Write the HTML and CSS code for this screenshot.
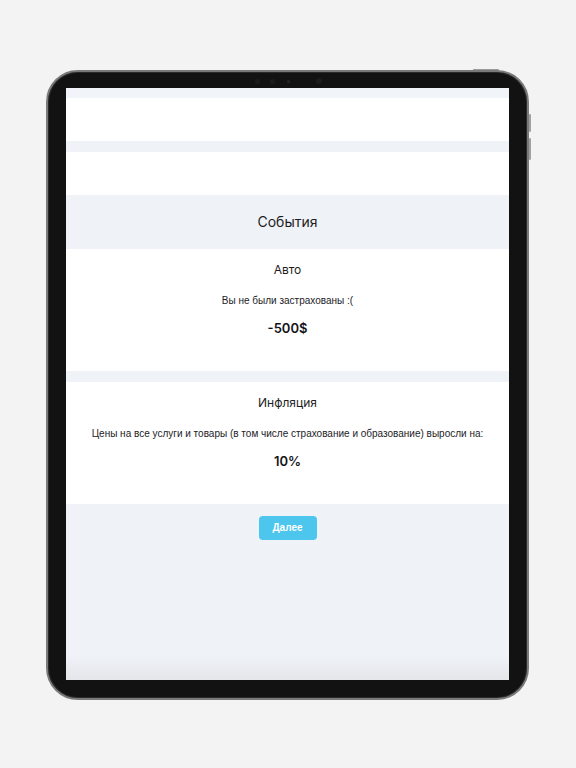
FILE: index.html
```html
<!DOCTYPE html>
<html lang="ru">
<head>
<meta charset="utf-8">
<title>События</title>
<link rel="stylesheet" href="styles.css">
</head>
<body>
<div class="device">
  <span class="cam cam-a"></span>
  <span class="cam cam-b"></span>
  <span class="cam cam-c"></span>
  <span class="cam cam-d"></span>
  <span class="btn-top"></span>
  <span class="btn-side btn-side-1"></span>
  <span class="btn-side btn-side-2"></span>
  <div class="screen">
    <div class="strip"></div>
    <div class="blank"></div>
    <div class="gap"></div>
    <div class="blank"></div>
    <div class="header">События</div>
    <section class="card">
      <h2 class="card-title">Авто</h2>
      <p class="card-text">Вы не были застрахованы :(</p>
      <p class="card-value">-500$</p>
    </section>
    <div class="gap"></div>
    <section class="card">
      <h2 class="card-title">Инфляция</h2>
      <p class="card-text">Цены на все услуги и товары (в том числе страхование и образование) выросли на:</p>
      <p class="card-value">10%</p>
    </section>
    <div class="footer">
      <button class="next">Далее</button>
    </div>
  </div>
</div>
</body>
</html>
```
FILE: styles.css
```css
* { box-sizing: border-box; }

html, body {
  margin: 0;
  height: 100%;
}

body {
  background: #f4f3f3;
  display: flex;
  align-items: center;
  justify-content: center;
  font-family: "Liberation Sans", Arial, sans-serif;
  color: #1b1b1f;
}

/* tablet frame */
.device {
  position: relative;
  width: 483px;
  height: 630px;
  margin-top: 1px;
  margin-right: 1px;
  padding: 16px 18px 18px 18px;
  background: #121212;
  border: 2px solid #7a7a7a;
  border-radius: 32px;
  box-shadow: inset 0 0 0 1px #2a2a2a;
}

.cam {
  position: absolute;
  top: 7px;
  width: 5px;
  height: 5px;
  border-radius: 50%;
  background: #1c1c1f;
}
.cam-a { left: 207px; }
.cam-b { left: 222px; }
.cam-c { left: 239px; width: 3px; height: 3px; top: 8px; background: #26262a; }
.cam-d { left: 268px; width: 6px; height: 6px; top: 6px; }

.btn-top {
  position: absolute;
  top: -3px;
  right: 28px;
  width: 26px;
  height: 1px;
  border-radius: 1px;
  background: #9a9a9a;
}
.btn-side {
  position: absolute;
  right: -4px;
  width: 2px;
  border-radius: 1px;
  background: #a0a0a0;
}
.btn-side-1 { top: 42px; height: 18px; }
.btn-side-2 { top: 66px; height: 22px; }

/* app screen */
.screen {
  width: 443px;
  height: 592px;
  overflow: hidden;
  display: flex;
  flex-direction: column;
  background: #eff2f7;
}

.strip { height: 10px; background: #f1f4f9; flex: none; }
.blank { height: 43px; background: #ffffff; flex: none; }
.gap { height: 11px; background: #eff2f7; flex: none; }

.header {
  flex: none;
  height: 54px;
  display: flex;
  align-items: center;
  justify-content: center;
  background: #eff2f7;
  font-family: "Inter", "Noto Sans", sans-serif;
  font-size: 14px;
  color: #1d1d22;
}

.card {
  flex: none;
  height: 122px;
  padding-top: 14px;
  background: #ffffff;
  text-align: center;
}

.card-title {
  margin: 0;
  font-family: "Inter", "Noto Sans", sans-serif;
  font-weight: 400;
  font-size: 12px;
  line-height: 14px;
  color: #1d1d22;
}

.card-text {
  margin: 18px 0 0;
  font-size: 10px;
  line-height: 12px;
  color: #222226;
}

.card-value {
  margin: 13px 0 0;
  font-family: "Inter", "Noto Sans", sans-serif;
  font-weight: 600;
  font-size: 13px;
  line-height: 16px;
  color: #141418;
}

.footer {
  flex: 1;
  display: flex;
  justify-content: center;
  align-items: flex-start;
  padding-top: 12px;
  background: linear-gradient(to bottom, #eff2f7 0%, #eff2f7 86%, #e4e6ea 100%);
}

.next {
  width: 58px;
  height: 24px;
  border: none;
  border-radius: 4px;
  background: #4cc6ec;
  color: #ffffff;
  font-family: "Liberation Sans", Arial, sans-serif;
  font-weight: 700;
  font-size: 10px;
  padding: 0;
}
```
